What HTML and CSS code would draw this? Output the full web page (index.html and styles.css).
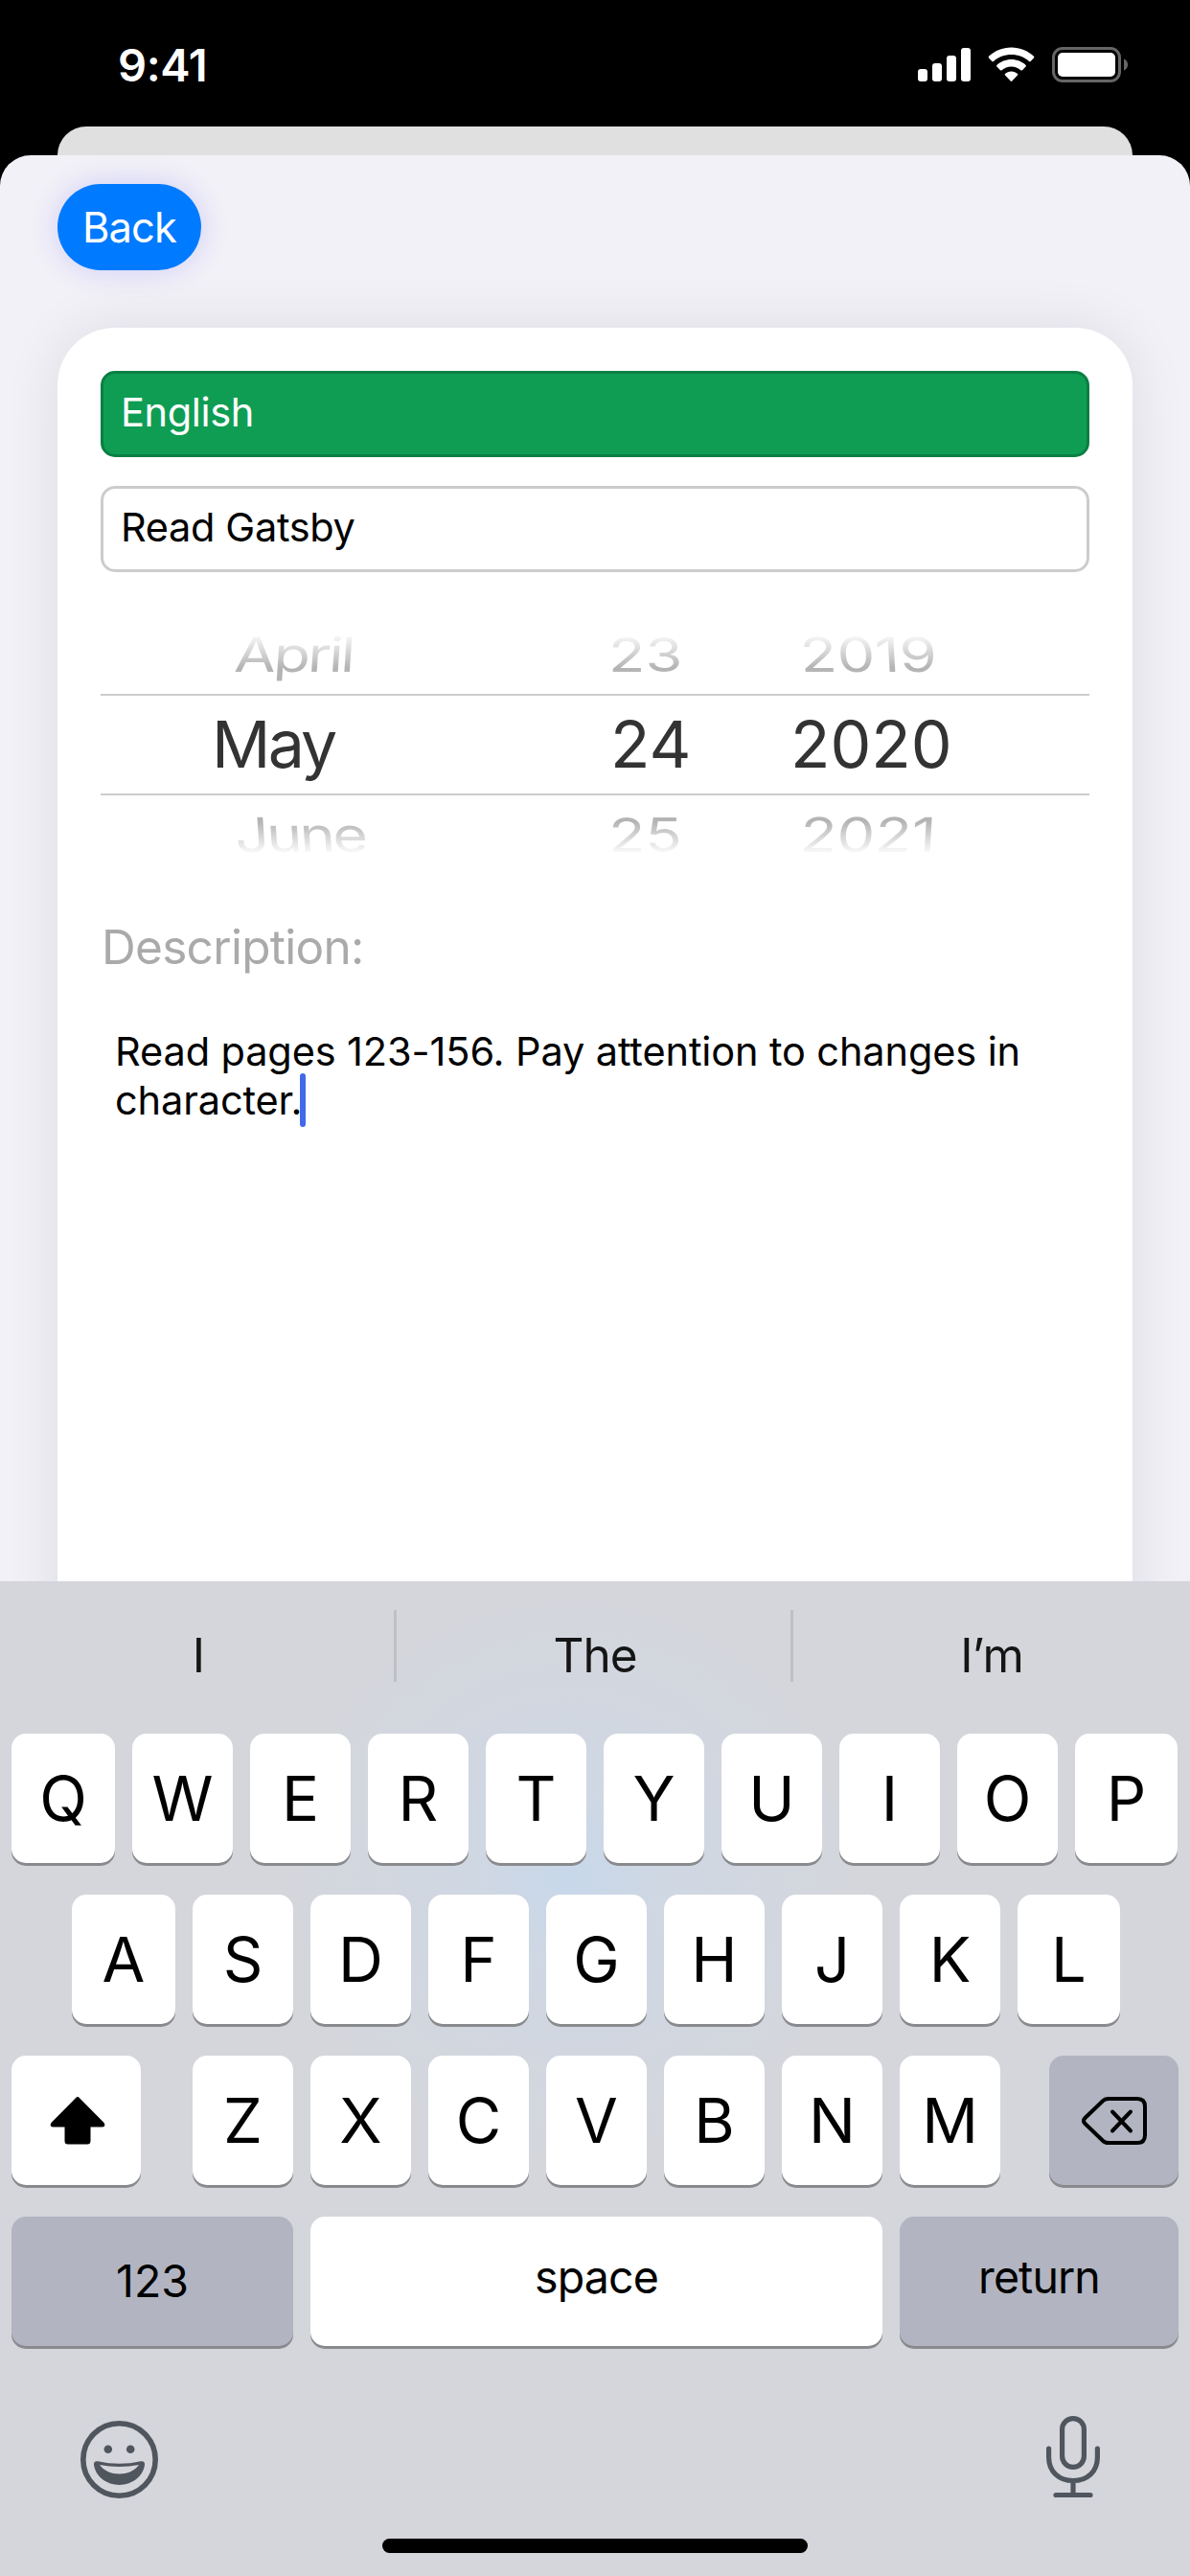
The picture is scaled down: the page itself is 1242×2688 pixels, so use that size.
FILE: index.html
```html
<!DOCTYPE html>
<html lang="en">
<head>
<meta charset="utf-8">
<title>Edit assignment</title>
<link rel="stylesheet" href="styles.css">
</head>
<body>
<div class="phone">
  <header class="status">
    <span class="time">9:41</span>
    <svg class="status-icons" viewBox="0 0 220 38" width="220" height="38">
      <g fill="#fff">
        <rect x="0" y="23" width="10" height="13" rx="3"/>
        <rect x="15" y="17" width="10" height="19" rx="3"/>
        <rect x="30" y="9" width="10" height="27" rx="3"/>
        <rect x="45" y="1" width="10" height="35" rx="3"/>
        <path d="M97.500 0.500C106.500 0.500 115 4 121 9.800Q121.800 10.600 121 11.400L117.600 15Q116.800 15.700 116 15C111 10.300 104.500 8 97.500 8C90.500 8 84 10.300 79 15Q78.200 15.700 77.400 15L74 11.400Q73.200 10.600 74 9.800C80 4 88.500 0.500 97.500 0.500Z"/>
        <path d="M97.500 13C103.200 13 108.700 15.200 112.600 18.900Q113.400 19.700 112.600 20.500L109 24.200Q108.200 24.900 107.400 24.200C104.700 21.800 101.200 20.400 97.500 20.400C93.800 20.400 90.300 21.800 87.600 24.200Q86.800 24.900 86 24.200L82.400 20.500Q81.600 19.700 82.400 18.900C86.300 15.200 91.800 13 97.500 13Z"/>
        <path d="M97.500 25.500C100 25.500 102.300 26.400 104 27.900Q104.900 28.700 104 29.600L98.300 35.500Q97.500 36.300 96.700 35.500L91 29.600Q90.100 28.700 91 27.900C92.700 26.400 95 25.500 97.500 25.500Z"/>
        <rect x="146" y="6" width="60" height="25" rx="5"/>
      </g>
      <rect x="141.500" y="1.500" width="69" height="34" rx="9.500" fill="none" stroke="#666" stroke-width="3"/>
      <path d="M215 12.500C220.500 14.500 220.500 22.500 215 24.500Z" fill="#666"/>
    </svg>
  </header>
  <div class="sheet-behind"></div>
  <main class="sheet">
    <button class="back">Back</button>
    <section class="card">
      <div class="field subject">English</div>
      <div class="field">Read Gatsby</div>
      <div class="picker">
        <div class="wheel above"><span class="month">April</span><span class="day">23</span><span class="year">2019</span></div>
        <div class="wheel current"><span class="month">May</span><span class="day">24</span><span class="year">2020</span></div>
        <div class="wheel below"><span class="month">June</span><span class="day">25</span><span class="year">2021</span></div>
      </div>
      <h2 class="label">Description:</h2>
      <p class="notes">Read pages 123-156. Pay attention to changes in<br>character.<span class="caret"></span></p>
    </section>
  </main>
  <section class="keyboard">
    <div class="suggestions">
      <span class="suggestion">I</span>
      <span class="suggestion">The</span>
      <span class="suggestion">I’m</span>
    </div>
    <div class="keys row-one">
      <span class="key">Q</span><span class="key">W</span><span class="key">E</span><span class="key">R</span><span class="key">T</span><span class="key">Y</span><span class="key">U</span><span class="key">I</span><span class="key">O</span><span class="key">P</span>
    </div>
    <div class="keys row-two">
      <span class="key">A</span><span class="key">S</span><span class="key">D</span><span class="key">F</span><span class="key">G</span><span class="key">H</span><span class="key">J</span><span class="key">K</span><span class="key">L</span>
    </div>
    <div class="keys row-three">
      <span class="key shift"><svg viewBox="0 0 58 50" width="58" height="50"><path d="M29 0Q30 0 31 1.200L56.500 27Q58 29 57 30.500Q56.500 31.500 54.500 31.500H42.500V46Q42.500 49.500 39 49.500H19Q15.500 49.500 15.500 46V31.500H3.500Q1.500 31.500 1 30.500Q0 29 1.500 27L27 1.200Q28 0 29 0Z"/></svg></span>
      <span class="key">Z</span><span class="key">X</span><span class="key">C</span><span class="key">V</span><span class="key">B</span><span class="key">N</span><span class="key">M</span>
      <span class="key dark delete"><svg viewBox="0 0 68 50" width="68" height="50" fill="none" stroke="#000" stroke-width="4" stroke-linecap="round" stroke-linejoin="round"><path d="M28 2H58Q66 2 66 10V40Q66 48 58 48H28Q24 48 21.500 45.300L3.500 28Q0.500 25 3.500 22L21.500 4.700Q24 2 28 2Z"/><path d="M32 15.500L51 35.500M51 15.500L32 35.500"/></svg></span>
    </div>
    <div class="keys row-four">
      <span class="key word dark numbers">123</span><span class="key word">space</span><span class="key word dark">return</span>
    </div>
    <div class="tools">
      <svg class="emoji" viewBox="0 0 82 82" width="82" height="82"><circle cx="40.500" cy="40.500" r="37.700" fill="none" stroke="#50565e" stroke-width="5.600"/><circle cx="28.800" cy="29.700" r="4.300" fill="#50565e"/><circle cx="52.200" cy="29.700" r="4.300" fill="#50565e"/><path fill="#50565e" fill-rule="evenodd" d="M18 42.300Q40.500 47.300 63 42.300Q67.500 41.800 67 46.300C65 58.500 53.500 67 40.500 67C27.500 67 16 58.500 14 46.300Q13.500 41.800 18 42.300ZM20 46C24.500 52.500 32.500 55.500 40.500 55.500C48.500 55.500 56.500 52.500 61 46Q40.500 50 20 46Z"/></svg>
      <svg viewBox="0 0 58 86" width="58" height="86" fill="none" stroke="#50565e" stroke-width="5.200" stroke-linecap="round"><rect x="17.600" y="2.600" width="22.800" height="50.800" rx="11.400"/><path d="M3.600 34V43C3.600 58 14 67.500 29 67.500C44 67.500 54.400 58 54.400 43V34M29 68V82M11 82.500H47"/></svg>
    </div>
    <div class="home"></div>
  </section>
</div>
</body>
</html>
```

FILE: styles.css
```css
* { box-sizing: border-box; }
body {
  margin: 0;
  background: #000;
  font-family: Inter, "Liberation Sans", sans-serif;
  color: #000;
}
.phone {
  width: 1242px;
  height: 2688px;
  overflow: hidden;
  display: flex;
  flex-direction: column;
  background: #000;
}
.status {
  flex: none;
  height: 132px;
  padding: 0 63px 0 123px;
  display: flex;
  align-items: flex-start;
  justify-content: space-between;
}
.time {
  margin-top: 40px;
  font-size: 47px;
  line-height: 56px;
  font-weight: 600;
  letter-spacing: -0.400px;
  color: #fff;
}
.status-icons { margin: 49px -3px 0 0; margin-right: 1px; }
.sheet-behind {
  flex: none;
  height: 30px;
  margin: 0 60px;
  border-radius: 30px 30px 0 0;
  background: #e0e0e0;
}
.sheet {
  flex: none;
  height: 1488px;
  padding: 30px 60px 0;
  border-radius: 32px 32px 0 0;
  background: #f2f1f7;
  overflow: hidden;
}
.back {
  display: flex;
  align-items: center;
  justify-content: center;
  width: 150px;
  height: 90px;
  padding: 0;
  border: 0;
  border-radius: 45px;
  background: #007aff;
  box-shadow: 0 0 30px rgba(70, 60, 255, 0.2);
  color: #fff;
  font: 400 43.500px/54px Inter, sans-serif;
  letter-spacing: -0.900px;
}
.card {
  height: 1500px;
  margin-top: 60px;
  padding: 45px;
  border-radius: 60px;
  background: #fff;
  box-shadow: 0 0 60px rgba(20, 10, 40, 0.09);
}
.field {
  height: 90px;
  padding: 0 18px;
  border: 3px solid #ccc;
  border-radius: 15px;
  font-size: 41.500px;
  line-height: 80px;
  letter-spacing: -0.350px;
}
.subject {
  margin-bottom: 30px;
  border-color: #0b7f43;
  background: #0f9d54;
  color: #fff;
}
.picker {
  display: flex;
  flex-direction: column;
  gap: 6px;
  margin-top: 51px;
  height: 260px;
}
.wheel {
  display: grid;
  grid-template-columns: 500px 187px 345px;
  height: 70px;
  font-size: 63px;
  line-height: 70px;
}
.wheel span { transform-origin: 0 50%; width: max-content; }
.wheel .month { margin-left: 140px; letter-spacing: -2.800px; }
.wheel .day { margin-left: 30px; }
.wheel .year { margin-left: 43px; }
.above span, .below span {
  color: transparent;
  -webkit-background-clip: text;
  background-clip: text;
  transform: scaleY(0.790);
}
.above span { background-image: linear-gradient(#fff 8%, #b4b4b4 75%); }
.below span { background-image: linear-gradient(#b4b4b4 25%, #fff 88%); }
.above .month { transform: scaleY(0.790) skewX(-3deg); }
.above .year { transform: scaleY(0.790) skewX(2.500deg); }
.below .month { transform: scaleY(0.790) skewX(3deg); }
.below .year { transform: scaleY(0.790) skewX(-2.500deg); }
.wheel.current {
  height: 106px;
  border-top: 2px solid #ccc;
  border-bottom: 2px solid #ccc;
  font-size: 68px;
  line-height: 101px;
  color: #333;
}
.wheel.current .month { margin-left: 116px; }
.wheel.current .day { margin-left: 32px; }
.wheel.current .year { margin-left: 33px; }
.label {
  margin: 48px 0 0 1px;
  font-size: 49.500px;
  line-height: 64px;
  font-weight: 400;
  letter-spacing: -0.700px;
  color: #aaa;
}
.notes {
  margin: 52px 0 0 15px;
  font-size: 41.500px;
  line-height: 51px;
  letter-spacing: -0.120px;
  white-space: nowrap;
}
.caret {
  display: inline-block;
  width: 6px;
  height: 56px;
  margin: -6px 0 -6px -2px;
  vertical-align: -7px;
  border-radius: 3px;
  background: #4169ea;
}
.keyboard {
  flex: none;
  height: 1038px;
  background: radial-gradient(circle at 595px 310px, rgba(198, 216, 236, 0.900) 0, rgba(203, 216, 232, 0.600) 90px, rgba(212, 214, 221, 0) 290px), #d4d6dc;
}
.suggestions {
  display: grid;
  grid-template-columns: repeat(3, 414px);
  height: 159px;
  padding-top: 30px;
}
.suggestion {
  height: 75px;
  padding: 15px 0 0 3px;
  border-right: 3px solid #bfc0c6;
  text-align: center;
  font-size: 49.500px;
  line-height: 64px;
  letter-spacing: -1px;
  color: #151515;
}
.suggestion:last-child { border-right: 0; padding-left: 0; }
.keys {
  display: grid;
  grid-auto-flow: column;
  column-gap: 18px;
  height: 135px;
  margin-bottom: 33px;
  padding: 0 12px;
}
.key {
  display: flex;
  align-items: center;
  justify-content: center;
  height: 135px;
  border-radius: 15px;
  background: #fff;
  box-shadow: 0 3px 0 #898a8e;
  font-size: 65px;
  line-height: 135px;
}
.row-one { grid-template-columns: 108px repeat(8, 105px) 107px; }
.row-two { grid-template-columns: 108px repeat(7, 105px) 107px; padding-left: 75px; }
.row-three { display: flex; }
.row-three .key { width: 105px; }
.row-three .shift { width: 135px; margin-right: 36px; padding-left: 3px; }
.row-three .delete { width: 135px; margin-left: auto; }
.row-four { grid-template-columns: 294px 597px 291px; margin-bottom: 0; }
.key.dark { background: #b2b5c1; }
.key.word {
  align-items: flex-start;
  font-size: 46.500px;
  line-height: 126px;
  letter-spacing: -0.900px;
}
.key.numbers { line-height: 134px; letter-spacing: 0; }
.tools {
  display: flex;
  justify-content: space-between;
  align-items: flex-start;
  height: 201px;
  padding: 73px 93px 0 84px;
}
.emoji { margin-top: 5px; }
.home {
  width: 444px;
  height: 15px;
  margin: 0 auto;
  border-radius: 8px;
  background: #000;
}
```
